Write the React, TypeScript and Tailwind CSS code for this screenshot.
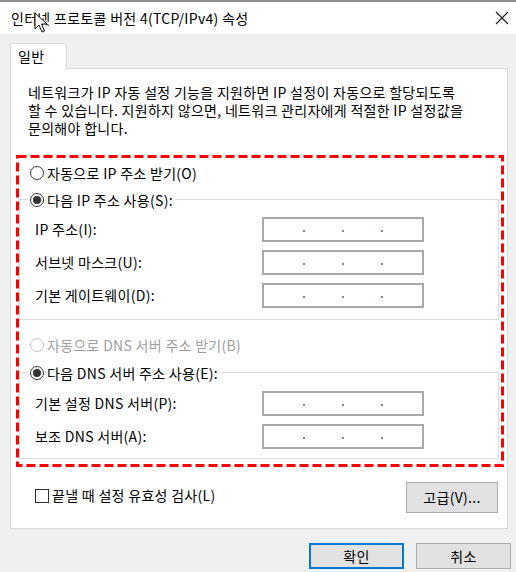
import type { ReactNode } from "react";

const font = { fontFamily: "'Noto Sans CJK KR', 'Noto Sans', sans-serif" };

function Radio({ checked, disabled }: { checked?: boolean; disabled?: boolean }) {
  return (
    <span
      className={`flex h-[14px] w-[14px] shrink-0 items-center justify-center rounded-full border bg-white ${
        disabled ? "border-[#c4c4c4]" : "border-[#333333]"
      }`}
    >
      {checked && <span className="h-[8px] w-[8px] rounded-full bg-[#333333]" />}
    </span>
  );
}

function IpBox() {
  return (
    <div className="flex h-[25px] w-[162px] items-end justify-center gap-[37px] border-2 border-[#a8a8a8] bg-white pb-[8px]">
      <span className="h-[2px] w-[2px] bg-[#7a8aa0]" />
      <span className="h-[2px] w-[2px] bg-[#7a8aa0]" />
      <span className="h-[2px] w-[2px] bg-[#7a8aa0]" />
    </div>
  );
}

function FieldRow({ label }: { label: string }) {
  return (
    <div className="flex h-[25px] items-center">
      <span className="w-[242px] pl-[15px] text-[14px] text-black">{label}</span>
      <IpBox />
    </div>
  );
}

function Group({ legend, children, inputTop, padBottom }: { legend: ReactNode; children: ReactNode; inputTop: string; padBottom: string }) {
  return (
    <div className={`mr-[2px] flex flex-col border border-[#dcdcdc] ${padBottom}`}>
      <div className="-mt-[13px] ml-[8px] flex h-[26px] items-center gap-[3px] self-start bg-white pl-[2px] pr-[2px]">{legend}</div>
      <div className={`flex flex-col gap-[8px] ${inputTop}`}>{children}</div>
    </div>
  );
}

export default function App() {
  return (
    <div
      className="relative h-[572px] w-[516px] overflow-hidden border-t-2 border-[#8e8e8e] bg-[#f0f0f0] tracking-[0.3px] text-black"
      style={font}
    >
      {/* title bar */}
      <div className="flex h-[32px] items-center justify-between bg-white pl-[11px] pr-[7px]">
        <span className="text-[14px]">인터넷 프로토콜 버전 4(TCP/IPv4) 속성</span>
        <svg width="14" height="14" viewBox="0 0 14 14">
          <path d="M1 1 L13 13 M13 1 L1 13" stroke="#222" strokeWidth="1.2" fill="none" />
        </svg>
      </div>

      {/* mouse cursor */}
      <svg width="14" height="22" viewBox="0 0 14 22" className="absolute left-[34px] top-[10px]">
        <path d="M1 1 L1 17 L5 13 L8 20 L10.5 19 L7.5 12 L13 12 Z" fill="white" stroke="#111" strokeWidth="1" strokeLinejoin="round" />
      </svg>

      <div className="px-[10px] pt-[9px]">
        {/* tab */}
        <div className="relative z-10 -mb-px flex h-[26px] w-[57px] items-center border border-b-0 border-[#d9d9d9] bg-white pl-[7px] text-[14px]">
          일반
        </div>

        {/* panel */}
        <div className="flex h-[461px] w-[498px] flex-col border border-[#d9d9d9] bg-white">
          <div className="px-[17px] pt-[14px] text-[14px] leading-[18px]">
            <div>네트워크가 IP 자동 설정 기능을 지원하면 IP 설정이 자동으로 할당되도록</div>
            <div>할 수 있습니다. 지원하지 않으면, 네트워크 관리자에게 적절한 IP 설정값을</div>
            <div>문의해야 합니다.</div>
          </div>

          {/* highlighted settings */}
          <div className="relative ml-[5px] mt-[18px] w-[488px] px-[3px] pb-[8px] pt-[5px]">
            <svg className="pointer-events-none absolute inset-0 z-20" width="488" height="312" viewBox="0 0 488 312">
              <rect x="1.5" y="1.5" width="485" height="309" fill="none" stroke="#ff0000" strokeWidth="3" strokeDasharray="9 4" />
            </svg>

            <div className="flex h-[26px] items-center gap-[3px] pl-[11px] text-[14px]">
              <Radio />
              <span>자동으로 IP 주소 받기(O)</span>
            </div>

            <div className="mt-[13px]">
              <Group
                inputTop="mt-[4px]"
                padBottom="pb-[11px]"
                legend={
                  <>
                    <Radio checked />
                    <span className="text-[14px]">다음 IP 주소 사용(S):</span>
                  </>
                }
              >
                <FieldRow label="IP 주소(I):" />
                <FieldRow label="서브넷 마스크(U):" />
                <FieldRow label="기본 게이트웨이(D):" />
              </Group>
            </div>

            <div className="mt-[12px] flex h-[26px] items-center gap-[3px] pl-[11px] text-[14px] text-[#a0a0a0]">
              <Radio disabled />
              <span>자동으로 DNS 서버 주소 받기(B)</span>
            </div>

            <div className="mt-[14px]">
              <Group
                inputTop="mt-[5px]"
                padBottom="pb-[9px]"
                legend={
                  <>
                    <Radio checked />
                    <span className="text-[14px]">다음 DNS 서버 주소 사용(E):</span>
                  </>
                }
              >
                <FieldRow label="기본 설정 DNS 서버(P):" />
                <FieldRow label="보조 DNS 서버(A):" />
              </Group>
            </div>
          </div>

          <div className="mt-[15px] flex items-start justify-between pl-[24px] pr-[9px]">
            <label className="mt-[3px] flex items-center gap-[3px] text-[14px]">
              <span className="h-[14px] w-[14px] border border-[#333333] bg-white" />
              <span>끝낼 때 설정 유효성 검사(L)</span>
            </label>
            <button className="flex h-[31px] w-[92px] items-center justify-center border border-[#adadad] bg-[#e1e1e1] text-[14px]">
              고급(V)...
            </button>
          </div>
        </div>

        {/* footer */}
        <div className="mt-[14px] flex justify-end gap-[12px]">
          <button className="flex h-[26px] w-[95px] items-center justify-center border-2 border-[#0078d7] bg-[#e1e1e1] text-[14px]">
            확인
          </button>
          <button className="-mr-[5px] flex h-[26px] w-[95px] items-center justify-center border border-[#adadad] bg-[#e1e1e1] text-[14px]">
            취소
          </button>
        </div>
      </div>
    </div>
  );
}
